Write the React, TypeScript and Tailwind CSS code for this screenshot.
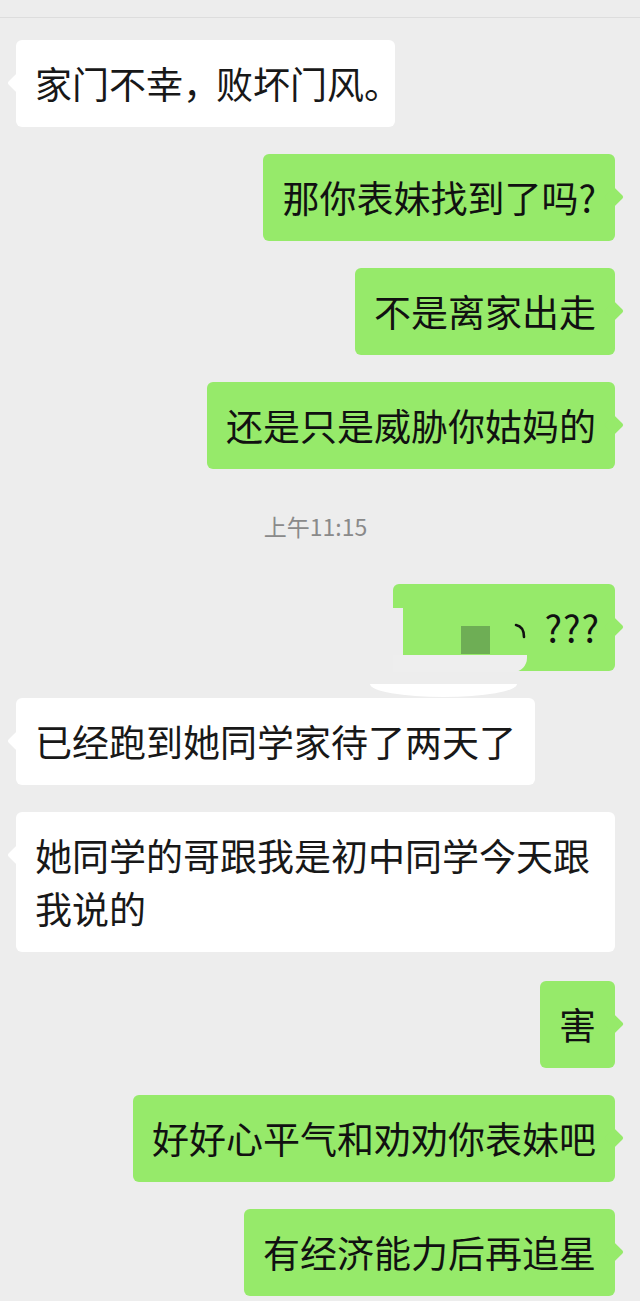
import React from "react";

type Msg =
  | { kind: "in"; text: React.ReactNode; wide?: boolean; extra?: string }
  | { kind: "out"; text: React.ReactNode }
  | { kind: "time"; text: string }
  | { kind: "edited" };

const messages: Msg[] = [
  {
    kind: "in",
    text: (
      <>
        家门不幸<span className="tracking-[-4px]">，</span>败坏门风<span className="tracking-[-25px]">。</span>
      </>
    ),
  },
  { kind: "out", text: "那你表妹找到了吗?" },
  { kind: "out", text: "不是离家出走" },
  { kind: "out", text: "还是只是威胁你姑妈的" },
  { kind: "time", text: "上午11:15" },
  { kind: "edited" },
  { kind: "in", text: "已经跑到她同学家待了两天了" },
  { kind: "in", text: "她同学的哥跟我是初中同学今天跟我说的", wide: true, extra: "mb-[2px]" },
  { kind: "out", text: "害" },
  { kind: "out", text: "好好心平气和劝劝你表妹吧" },
  { kind: "out", text: "有经济能力后再追星" },
];

const bubbleText = "text-[37px] leading-[53px] py-[17px] px-[19px]";

function InBubble({ children, wide }: { children: React.ReactNode; wide?: boolean }) {
  return (
    <div className="flex justify-start">
      <div
        className={`relative rounded-[6px] bg-white text-[#181818] ${bubbleText} ${wide ? "max-w-[601px]" : ""}`}
      >
        <span className="absolute left-[-6px] top-[36px] h-[14px] w-[14px] rotate-45 rounded-[2px] bg-white" />
        <span className="relative">{children}</span>
      </div>
    </div>
  );
}

function OutBubble({ children }: { children: React.ReactNode }) {
  return (
    <div className="flex justify-end">
      <div className={`relative rounded-[6px] bg-[#96ea6a] text-[#111111] ${bubbleText}`}>
        <span className="absolute right-[-6px] top-[36px] h-[14px] w-[14px] rotate-45 rounded-[2px] bg-[#96ea6a]" />
        <span className="relative">{children}</span>
      </div>
    </div>
  );
}

function EditedBubble() {
  return (
    <div className="flex justify-end">
      <div className="relative w-[222px] rounded-[6px] bg-[#96ea6a] py-[17px] pr-[15px] text-right text-[37px] leading-[53px] tracking-[1px] text-[#111111]">
        <span className="absolute right-[-6px] top-[36px] h-[14px] w-[14px] rotate-45 rounded-[2px] bg-[#96ea6a]" />
        <span className="relative">???</span>
        {/* fragment of a clipped character */}
        <svg className="absolute left-[121px] top-[39px]" width="14" height="16" viewBox="0 0 14 16">
          <path d="M2 2 C7 3 10 7 10 14" stroke="#111" strokeWidth="2.6" fill="none" strokeLinecap="round" />
        </svg>
        {/* masked square */}
        <span className="absolute left-[68px] top-[42px] h-[28px] w-[29px] bg-[#6eae55]" />
        {/* cut-out strips */}
        <span className="absolute bottom-0 left-0 top-[24px] w-[10px] bg-[#ededed]" />
        <span className="absolute left-0 top-[71px] h-[17px] w-[134px] rounded-br-[14px] bg-[#eeeeee]" />
        <span className="absolute left-[-23px] top-[100px] h-[13px] w-[147px] rounded-bl-[50%_100%] rounded-br-[50%_100%] bg-white" />
      </div>
    </div>
  );
}

export default function App() {
  return (
    <div className="min-h-[1301px] w-[640px] overflow-hidden bg-[#ededed] font-['Noto_Sans_CJK_SC','Noto_Sans',sans-serif]">
      <div className="h-[18px] border-b border-[#dddddd] bg-[#ededed]" />
      <div className="flex flex-col gap-[27px] pb-[10px] pl-[16px] pr-[25px] pt-[22px]">
        {messages.map((m, i) => {
          if (m.kind === "in")
            return (
              <div key={i} className={m.extra}>
                <InBubble wide={m.wide}>{m.text}</InBubble>
              </div>
            );
          if (m.kind === "out")
            return (
              <div key={i}>
                <OutBubble>{m.text}</OutBubble>
              </div>
            );
          if (m.kind === "time")
            return (
              <div key={i} className="text-center text-[23px] leading-[61px] text-[#8a8a8a]">
                {m.text}
              </div>
            );
          return <EditedBubble key={i} />;
        })}
      </div>
    </div>
  );
}
